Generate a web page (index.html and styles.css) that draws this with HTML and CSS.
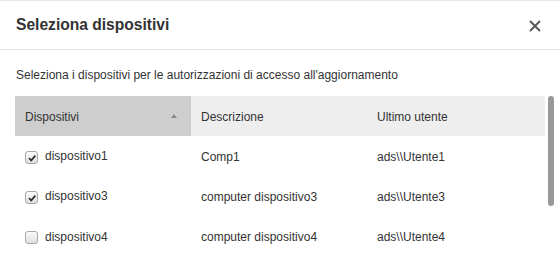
FILE: index.html
```html
<!DOCTYPE html>
<html>
    <head>
        <meta charset="utf-8">
        <link rel="stylesheet" href="styles.css">
    </head>

    <body>
        <div class="dialog">
            <div class="dialog-header">
                <h1>Seleziona dispositivi</h1>
                <span class="close">
                    <svg width="12" height="12" viewBox="0 0 12 12">
                        <path d="M1 1L11 11M11 1L1 11" stroke="#555" stroke-width="1.8" fill="none"/>
                    </svg>
                </span>
            </div>

            <p class="hint">Seleziona i dispositivi per le autorizzazioni di accesso all'aggiornamento</p>

            <div class="list">
                <table class="devices">
                    <thead>
                        <tr>
                            <th class="sorted">Dispositivi <span class="arrow"></span></th>
                            <th>Descrizione</th>
                            <th>Ultimo utente</th>
                        </tr>
                    </thead>
                    <tbody>
                        <tr>
                            <td><span class="cb checked"><svg width="10" height="10" viewBox="0 0 10 10"><path d="M2 5.2L4.2 7.4L8.4 2.6" stroke="#333" stroke-width="1.8" fill="none"/></svg></span>dispositivo1</td>
                            <td>Comp1</td>
                            <td>ads\\Utente1</td>
                        </tr>
                        <tr>
                            <td><span class="cb checked"><svg width="10" height="10" viewBox="0 0 10 10"><path d="M2 5.2L4.2 7.4L8.4 2.6" stroke="#333" stroke-width="1.8" fill="none"/></svg></span>dispositivo3</td>
                            <td>computer dispositivo3</td>
                            <td>ads\\Utente3</td>
                        </tr>
                        <tr>
                            <td><span class="cb"></span>dispositivo4</td>
                            <td>computer dispositivo4</td>
                            <td>ads\\Utente4</td>
                        </tr>
                    </tbody>
                </table>
                <div class="scrollbar"><div class="thumb"></div></div>
            </div>
        </div>
    </body>
</html>
```

FILE: styles.css
```css
* {
    box-sizing: border-box;
}

body {
    margin: 0;
    padding: 0;
    background-color: #fff;
    font-family: "Liberation Sans", Arial, sans-serif;
    color: #333;
}

.dialog {
    width: 560px;
    height: 255px;
    overflow: hidden;
    border-top: 1px solid #e8e8e8;
}

.dialog-header {
    display: flex;
    align-items: center;
    justify-content: space-between;
    height: 49px;
    padding: 0 19px 0 16px;
    border-bottom: 1px solid #e6e6e6;
}

.dialog-header h1 {
    margin: 0;
    font-size: 15.6px;
    font-weight: bold;
    color: #333;
}

.close {
    display: flex;
    padding-top: 1px;
}

.hint {
    margin: 0;
    padding: 18px 16px 0;
    height: 46px;
    font-size: 12px;
    line-height: 14px;
}

.list {
    display: flex;
    padding-left: 15px;
}

.devices {
    border-collapse: collapse;
    width: 530px;
    font-size: 12px;
    table-layout: fixed;
}

.devices th, .devices td {
    height: 40px;
    padding: 0 10px;
    text-align: left;
    font-weight: normal;
    white-space: nowrap;
}

.devices th {
    background-color: #eee;
    padding-top: 1px;
}

.devices th:nth-child(1) { width: 176px; }
.devices th:nth-child(2) { width: 176px; }

.devices th.sorted {
    background-color: #cecece;
    position: relative;
}

.arrow {
    position: absolute;
    right: 14px;
    top: 18px;
    border-left: 3px solid transparent;
    border-right: 3px solid transparent;
    border-bottom: 4px solid #8a8a8a;
}

.devices td {
    padding-top: 1px;
}

.cb {
    display: inline-flex;
    align-items: center;
    justify-content: center;
    vertical-align: -3px;
    width: 13px;
    height: 13px;
    margin-right: 7px;
    border: 1px solid #a9a9a9;
    border-radius: 3px;
    background: linear-gradient(#fcfcfc, #dedede);
}

.scrollbar {
    width: 15px;
    padding: 0 3px;
}

.thumb {
    width: 6px;
    height: 110px;
    border-radius: 3px;
    background-color: #999;
}
```
